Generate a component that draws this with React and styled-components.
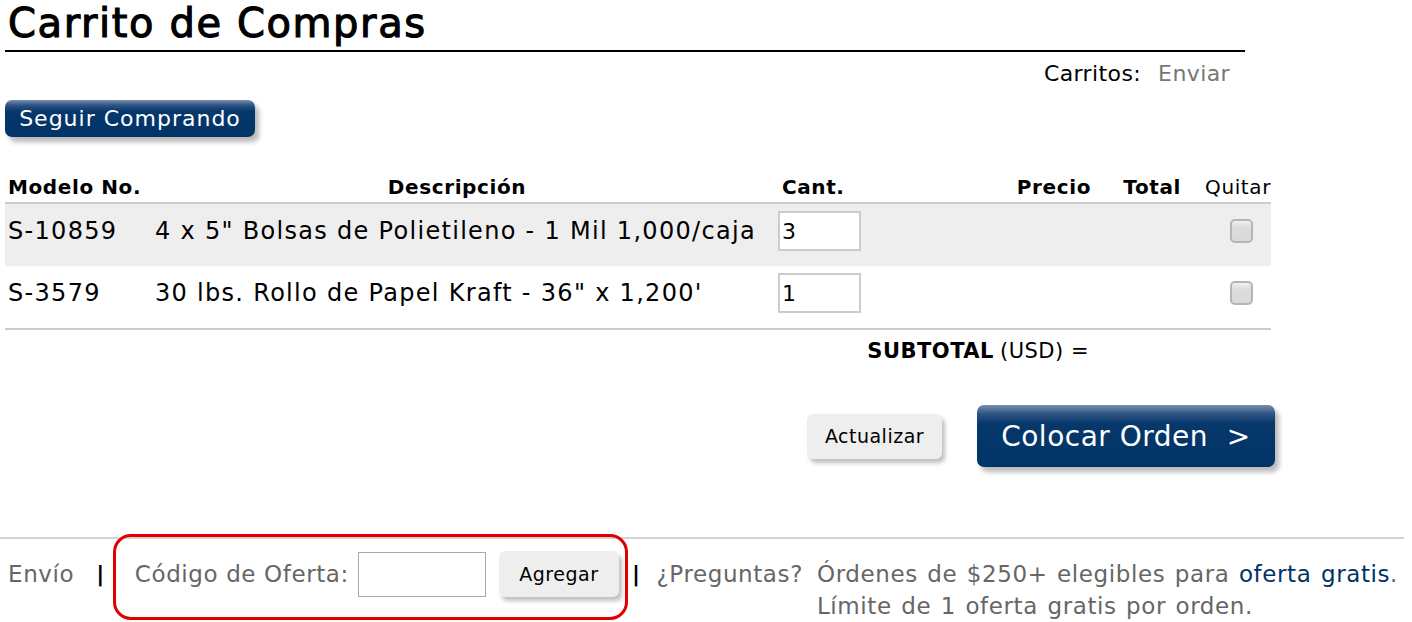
import React from "react";
import styled, { createGlobalStyle } from "styled-components";

const Global = createGlobalStyle`
  body {
    margin: 0;
    background: #fff;
    font-family: "DejaVu Sans", "Liberation Sans", sans-serif;
    color: #000;
  }
`;

const Page = styled.div`
  width: 1412px;
  height: 622px;
  overflow: hidden;
  display: flex;
  flex-direction: column;
`;

const Main = styled.div`
  padding: 0 5px;
  display: flex;
  flex-direction: column;
`;

const Title = styled.h1`
  margin: 0;
  width: 1240px;
  font-size: 40px;
  line-height: 46px;
  font-weight: normal;
  letter-spacing: 1.6px;
  padding-left: 3px;
  box-sizing: border-box;
  border-bottom: 2px solid #000;
  height: 52px;
  -webkit-text-stroke: 1.1px #000;
`;

const CartLinks = styled.div`
  width: 1240px;
  margin-top: 10px;
  display: flex;
  justify-content: flex-end;
  gap: 17px;
  padding-right: 15px;
  box-sizing: border-box;
  font-size: 22px;
  letter-spacing: 0.4px;
  line-height: 24px;
`;

const Muted = styled.span`
  color: #777;
`;

const BlueButton = styled.button`
  font-family: inherit;
  border: none;
  color: #fff;
  cursor: pointer;
  border-radius: 7px;
  background: linear-gradient(#7990ae 0%, #2f5483 14%, #07386c 30%, #003366 100%);
  box-shadow: 4px 5px 5px rgba(0, 0, 0, 0.28);
  font-size: ${p => p.$size}px;
  letter-spacing: ${p => p.$ls || 0}px;
  height: ${p => p.$h}px;
  width: ${p => p.$w}px;
  padding: 0;
`;

const GrayButton = styled.button`
  font-family: inherit;
  border: none;
  cursor: pointer;
  color: #000;
  background: #eeeeee;
  border-radius: 6px;
  box-shadow: 3px 4px 4px rgba(0, 0, 0, 0.25);
  font-size: ${p => p.$size}px;
  letter-spacing: 0.5px;
  height: ${p => p.$h}px;
  width: ${p => p.$w}px;
  padding: 0;
`;

const ButtonRow = styled.div`
  display: flex;
  justify-content: ${p => p.$justify || "flex-start"};
  align-items: center;
  gap: 35px;
  margin-top: ${p => p.$mt}px;
  width: ${p => p.$width || "auto"};
`;

const Table = styled.div`
  width: 1266px;
  margin-top: 35px;
  display: flex;
  flex-direction: column;
`;

const Row = styled.div`
  display: grid;
  grid-template-columns: 145px 620px 100px 225px 90px 86px;
  height: ${p => p.$h}px;
  box-sizing: border-box;
  padding-bottom: ${p => p.$head ? 0 : 8}px;
  align-items: center;
  background: ${p => p.$shade ? "#eeeeee" : "transparent"};
  border-bottom: ${p => p.$line ? "2px solid #cccccc" : "none"};
  font-size: ${p => p.$head ? 20 : 24}px;
  letter-spacing: ${p => p.$head ? 0.6 : 1.3}px;
  font-weight: ${p => p.$head ? "bold" : "normal"};
`;

const Cell = styled.div`
  display: flex;
  align-items: center;
  justify-content: ${p => p.$align || "flex-start"};
  padding: ${p => p.$pad || "0 3px"};
  font-weight: ${p => p.$light ? "normal" : "inherit"};
  white-space: nowrap;
`;

const QtyInput = styled.input`
  width: 83px;
  height: 40px;
  box-sizing: border-box;
  border: 2px solid #cccccc;
  background: #fff;
  font-family: inherit;
  font-size: 22px;
  padding: 0 2px;
  color: #000;
`;

const RemoveBox = styled.input`
  appearance: none;
  margin: 0;
  width: 23px;
  height: 24px;
  border: 2px solid #b5b5b5;
  border-radius: 5px;
  background: linear-gradient(#f2f2f2 0%, #dddddd 30%, #d9d9d9 100%);
`;

const Subtotal = styled.div`
  width: 1084px;
  height: 42px;
  display: flex;
  justify-content: flex-end;
  align-items: center;
  font-size: 21px;
  letter-spacing: 0.5px;
  gap: 6px;
`;

const Footer = styled.footer`
  margin-top: 70px;
  border-top: 2px solid #d4d4d4;
  width: 1404px;
  display: flex;
  align-items: flex-start;
  padding: 12px 0 0 8px;
  box-sizing: border-box;
  font-size: 23px;
  letter-spacing: 0.6px;
  color: #666;
  line-height: 32px;
`;

const FootItem = styled.div`
  display: flex;
  align-items: center;
  height: 46px;
  margin-right: ${p => p.$mr || 0}px;
`;

const Pipe = styled.span`
  color: #000;
  font-weight: bold;
  font-size: 22px;
`;

const OfferWrap = styled.div`
  position: relative;
  display: flex;
  align-items: center;
  gap: 9px;
  height: 46px;
  margin: 0 13px 0 30px;
`;

const Highlight = styled.div`
  position: absolute;
  left: -22px;
  right: -9px;
  top: -17px;
  bottom: -23px;
  border: 3px solid #e00000;
  border-radius: 18px;
  pointer-events: none;
`;

const CodeInput = styled.input`
  width: 128px;
  height: 45px;
  box-sizing: border-box;
  border: 1px solid #aaaaaa;
  background: #fff;
  margin-right: 4px;
`;

const Notice = styled.div`
  display: flex;
  flex-direction: column;
  margin-top: 7px;
  word-spacing: 1.6px;
`;

const Link = styled.span`
  color: #003366;
`;

export default function App() {
  return (
    <Page>
      <Global />
      <Main>
        <Title>Carrito de Compras</Title>
        <CartLinks>
          <span>Carritos:</span>
          <Muted>Enviar</Muted>
        </CartLinks>
        <ButtonRow $mt={14}>
          <BlueButton $size={22} $ls={1} $h={37} $w={250}>Seguir Comprando</BlueButton>
        </ButtonRow>
        <Table>
          <Row $h={32} $line $head>
            <Cell>Modelo No.</Cell>
            <Cell $align="center" $pad="0 6px 0 0">Descripción</Cell>
            <Cell $pad="0 0 0 12px">Cant.</Cell>
            <Cell $align="flex-end" $pad="0 4px 0 0">Precio</Cell>
            <Cell $align="flex-end" $pad="0 4px 0 0">Total</Cell>
            <Cell $align="flex-end" $pad="0" $light>Quitar</Cell>
          </Row>
          <Row $h={62} $shade>
            <Cell>S-10859</Cell>
            <Cell $pad="0 0 0 5px">4 x 5" Bolsas de Polietileno - 1 Mil 1,000/caja</Cell>
            <Cell $pad="0 0 0 8px"><QtyInput defaultValue="3" /></Cell>
            <Cell />
            <Cell />
            <Cell $pad="0 0 0 45px"><RemoveBox type="checkbox" /></Cell>
          </Row>
          <Row $h={64} $line>
            <Cell>S-3579</Cell>
            <Cell $pad="0 0 0 5px">30 lbs. Rollo de Papel Kraft - 36" x 1,200'</Cell>
            <Cell $pad="0 0 0 8px"><QtyInput defaultValue="1" /></Cell>
            <Cell />
            <Cell />
            <Cell $pad="0 0 0 45px"><RemoveBox type="checkbox" /></Cell>
          </Row>
        </Table>
        <Subtotal>
          <b>SUBTOTAL</b>
          <span>(USD) =</span>
        </Subtotal>
        <ButtonRow $mt={33} $justify="flex-end" $width="1270px">
          <GrayButton $size={19} $h={45} $w={135}>Actualizar</GrayButton>
          <BlueButton $size={28} $ls={0.5} $h={62} $w={298}>Colocar Orden&nbsp; &gt;</BlueButton>
        </ButtonRow>
      </Main>
      <Footer>
        <FootItem $mr={22}>Envío</FootItem>
        <FootItem><Pipe>|</Pipe></FootItem>
        <OfferWrap>
          <Highlight />
          <span>Código de Oferta:</span>
          <CodeInput />
          <GrayButton $size={19} $h={46} $w={120}>Agregar</GrayButton>
        </OfferWrap>
        <FootItem $mr={16}><Pipe>|</Pipe></FootItem>
        <FootItem $mr={14}>¿Preguntas?</FootItem>
        <Notice>
          <span>Órdenes de $250+ elegibles para <Link>oferta gratis</Link>.</span>
          <span>Límite de 1 oferta gratis por orden.</span>
        </Notice>
      </Footer>
    </Page>
  );
}
